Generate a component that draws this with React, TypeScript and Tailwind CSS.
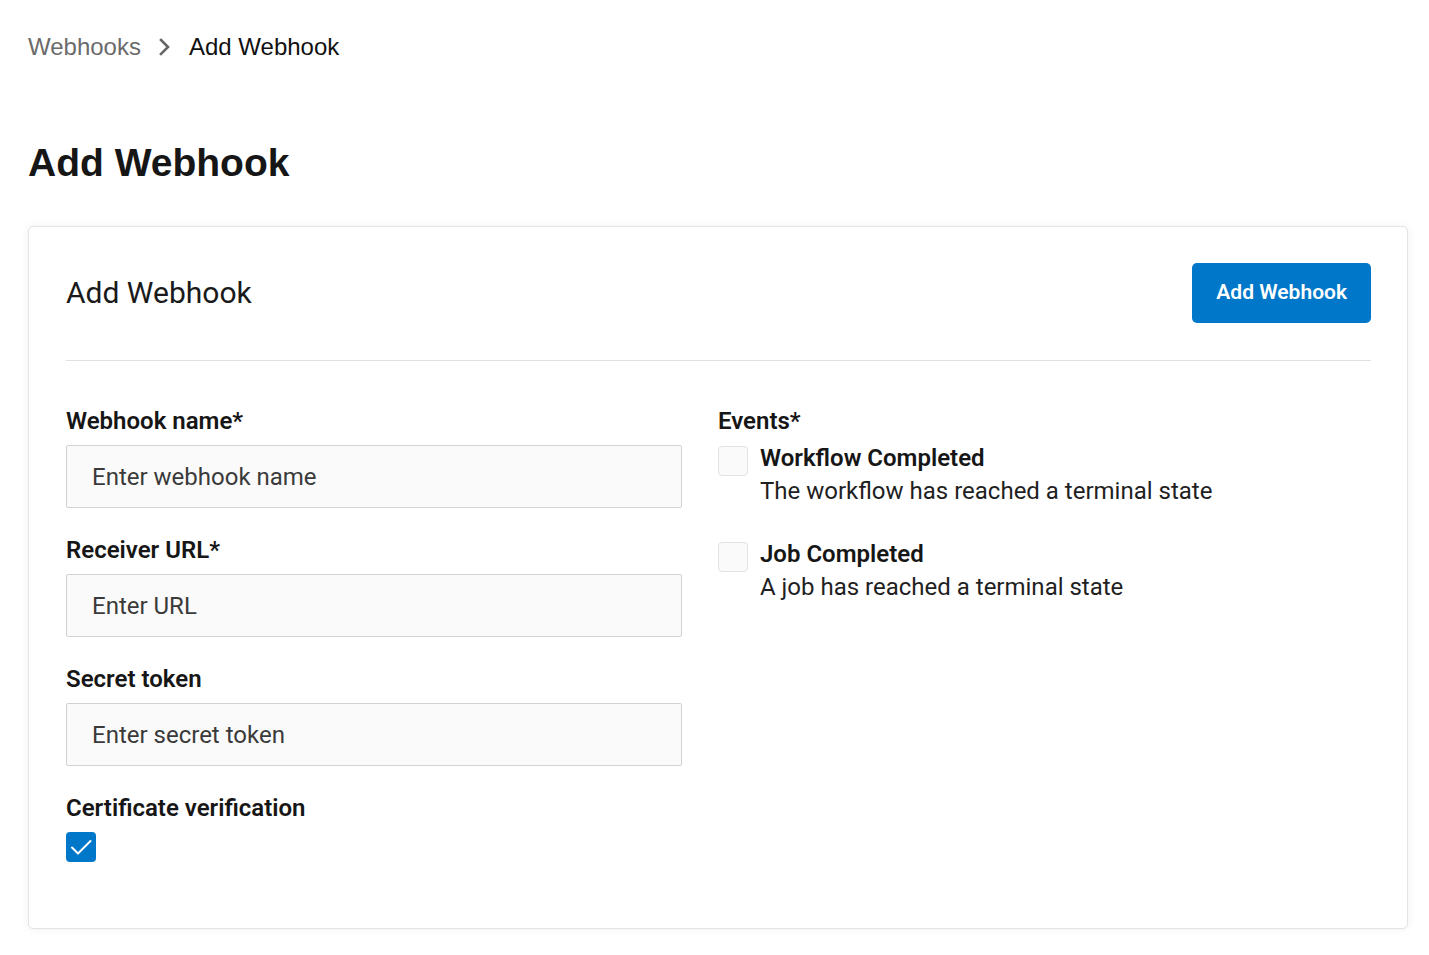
import { useState } from "react";

export default function App() {
  const [certVerify, setCertVerify] = useState(true);
  const [events, setEvents] = useState({ workflow: false, job: false });

  return (
    <div className="min-h-screen bg-white pl-7 pr-[21px] pt-[32px] pb-6 font-['Roboto',sans-serif] text-[#1a1a1a]">
      {/* Breadcrumb */}
      <nav className="flex items-center gap-[18px] font-['Liberation_Sans',Arial,sans-serif] text-[24px] leading-[30px]">
        <span className="text-[#6b6b6b]">Webhooks</span>
        <svg width="14" height="20" viewBox="0 0 14 20" fill="none" className="mx-[-1px]">
          <path d="M3 3l7 7-7 7" stroke="#666" strokeWidth="2.6" strokeLinecap="square" strokeLinejoin="miter" />
        </svg>
        <span className="text-[#111]">Add Webhook</span>
      </nav>

      {/* Page title */}
      <h1 className="mt-[77px] font-['Liberation_Sans',Arial,sans-serif] text-[39px] font-bold leading-[48px] text-[#161616]">
        Add Webhook
      </h1>

      {/* Card */}
      <div className="mt-[39px] rounded-[5px] border border-[#e3e3e3] bg-white pl-[37px] pr-[36px] pt-[36px] pb-[66px] shadow-[0_0_10px_rgba(0,0,0,0.06)]">
        <div className="flex items-center justify-between border-b border-[#e0e0e0] pb-[37px]">
          <h2 className="text-[30px] leading-[36px] text-[#1a1a1a]">Add Webhook</h2>
          <button
            type="button"
            className="h-[60px] rounded-[5px] bg-[#0077c8] px-6 text-[21px] font-semibold text-white"
          >
            Add Webhook
          </button>
        </div>

        <div className="mt-[46px] grid grid-cols-[616px_1fr] gap-x-9">
          {/* Left column */}
          <div className="flex flex-col gap-[28px]">
            {[
              ["Webhook name*", "Enter webhook name"],
              ["Receiver URL*", "Enter URL"],
              ["Secret token", "Enter secret token"],
            ].map(([label, ph]) => (
              <div key={label} className="flex flex-col gap-[10px]">
                <label className="text-[24px] font-semibold leading-[28px] text-[#161616]">{label}</label>
                <input
                  placeholder={ph}
                  className="h-[63px] w-full rounded-[2px] border border-[#d2d2d2] bg-[#fafafa] px-[25px] text-[24px] text-[#222] outline-none placeholder:text-[#3a3a3a]"
                />
              </div>
            ))}

            <div className="flex flex-col gap-[10px]">
              <label className="text-[24px] font-semibold leading-[28px] text-[#161616]">
                Certificate verification
              </label>
              <button
                type="button"
                onClick={() => setCertVerify((v) => !v)}
                className={
                  certVerify
                    ? "flex h-[30px] w-[30px] items-center justify-center rounded-[4px] bg-[#0077c8]"
                    : "flex h-[30px] w-[30px] items-center justify-center rounded-[4px] border border-[#e2e2e2] bg-[#fafafa]"
                }
                aria-label="Certificate verification"
              >
                {certVerify && (
                  <svg width="24" height="24" viewBox="0 0 24 24" fill="none">
                    <path d="M3 12.5l6 6L21.5 6" stroke="white" strokeWidth="2" strokeLinecap="round" strokeLinejoin="round" />
                  </svg>
                )}
              </button>
            </div>
          </div>

          {/* Right column */}
          <div className="flex flex-col">
            <span className="text-[24px] font-semibold leading-[28px] text-[#161616]">Events*</span>
            <div className="mt-[7px] flex flex-col gap-[30px]">
              {[
                { key: "workflow" as const, title: "Workflow Completed", desc: "The workflow has reached a terminal state" },
                { key: "job" as const, title: "Job Completed", desc: "A job has reached a terminal state" },
              ].map((ev) => (
                <div key={ev.key} className="flex gap-3">
                  <button
                    type="button"
                    onClick={() => setEvents((s) => ({ ...s, [ev.key]: !s[ev.key] }))}
                    className={
                      events[ev.key]
                        ? "mt-[4px] flex h-[30px] w-[30px] shrink-0 items-center justify-center rounded-[4px] bg-[#0077c8]"
                        : "mt-[4px] h-[30px] w-[30px] shrink-0 rounded-[4px] border border-[#e2e2e2] bg-[#fafafa]"
                    }
                    aria-label={ev.title}
                  >
                    {events[ev.key] && (
                      <svg width="24" height="24" viewBox="0 0 24 24" fill="none">
                        <path d="M3 12.5l6 6L21.5 6" stroke="white" strokeWidth="2" strokeLinecap="round" strokeLinejoin="round" />
                      </svg>
                    )}
                  </button>
                  <div className="flex flex-col text-[24px] leading-[33px]">
                    <span className="font-semibold text-[#161616]">{ev.title}</span>
                    <span className="text-[#1f1f1f]">{ev.desc}</span>
                  </div>
                </div>
              ))}
            </div>
          </div>
        </div>
      </div>
    </div>
  );
}
